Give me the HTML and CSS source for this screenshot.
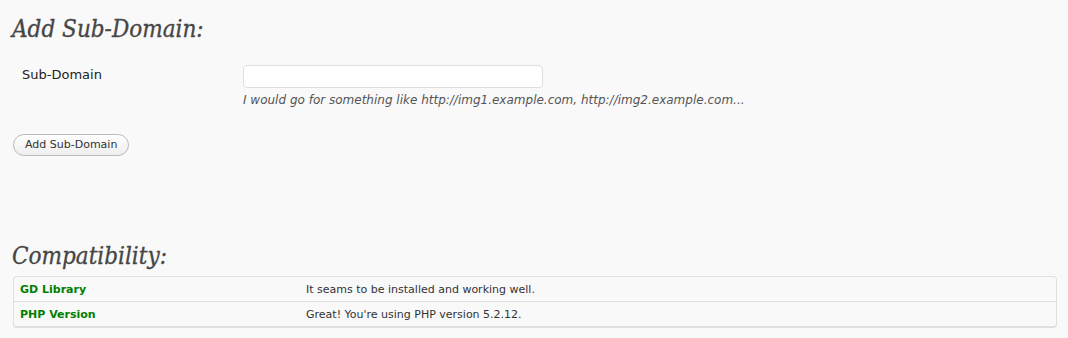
FILE: index.html
```html
<!DOCTYPE html>
<html>
<head>
<meta charset="utf-8">
<link rel="stylesheet" href="styles.css">
</head>
<body>
<div class="wrap">
  <h2 class="title">Add Sub-Domain:</h2>
  <div class="form-row">
    <div class="form-label">Sub-Domain</div>
    <div class="form-field">
      <input type="text" class="text-input">
      <div class="desc">I would go for something like http://img1.example.com, http://img2.example.com...</div>
    </div>
  </div>
  <div class="submit">
    <button class="button">Add Sub-Domain</button>
  </div>

  <h2 class="title title-compat">Compatibility:</h2>
  <div class="compat">
    <div class="compat-row">
      <div class="compat-name">GD Library</div>
      <div class="compat-msg">It seams to be installed and working well.</div>
    </div>
    <div class="compat-row">
      <div class="compat-name">PHP Version</div>
      <div class="compat-msg">Great! You're using PHP version 5.2.12.</div>
    </div>
  </div>
</div>
</body>
</html>
```
FILE: styles.css
```css
html, body {
  margin: 0;
  padding: 0;
  background: #f9f9f9;
}
body {
  font-family: "DejaVu Sans", "Liberation Sans", sans-serif;
  color: #333;
}
.wrap {
  padding: 0 11px 0 13px;
}
.title {
  font-family: "DejaVu Serif Condensed", "DejaVu Serif", "Liberation Serif", serif;
  font-style: italic;
  font-weight: normal;
  font-size: 24px;
  color: #464646;
  -webkit-text-stroke: 0.3px #464646;
  margin: 0;
  padding: 14px 0 0 0;
  margin-left: -1px;
  line-height: 30px;
}
.form-row {
  display: flex;
  margin-top: 20px;
}
.form-label {
  width: 221px;
  padding: 3px 0 0 9px;
  font-size: 13px;
  color: #222;
}
.form-field {
  display: flex;
  flex-direction: column;
}
.text-input {
  width: 300px;
  height: 23px;
  box-sizing: border-box;
  border: 1px solid #dfdfdf;
  border-radius: 4px;
  background: #fff;
  margin: 1px 0 0 0;
  padding: 0 4px;
}
.desc {
  font-size: 12px;
  font-style: italic;
  color: #555;
  margin-top: 5px;
}
.submit {
  margin-top: 26px;
}
.button {
  font-family: "DejaVu Sans", "Liberation Sans", sans-serif;
  font-size: 11px;
  color: #333;
  height: 22px;
  padding: 0 11px;
  border: 1px solid #bbb;
  border-radius: 11px;
  background: linear-gradient(#fff, #eee);
  margin: 0;
}
.title-compat {
  padding-top: 85px;
}
.compat {
  margin-top: 5px;
  border: 1px solid #dfdfdf;
  border-bottom-width: 2px;
  border-radius: 4px;
  background: #f9f9f9;
}
.compat-row {
  display: flex;
  height: 24px;
  padding-top: 1px;
  box-sizing: border-box;
  align-items: center;
  font-size: 11px;
}
.compat-row + .compat-row {
  border-top: 1px solid #dfdfdf;
  height: 25px;
}
.compat-name {
  width: 286px;
  padding-left: 6px;
  font-weight: bold;
  color: #008000;
}
.compat-msg {
  color: #333;
}
```
